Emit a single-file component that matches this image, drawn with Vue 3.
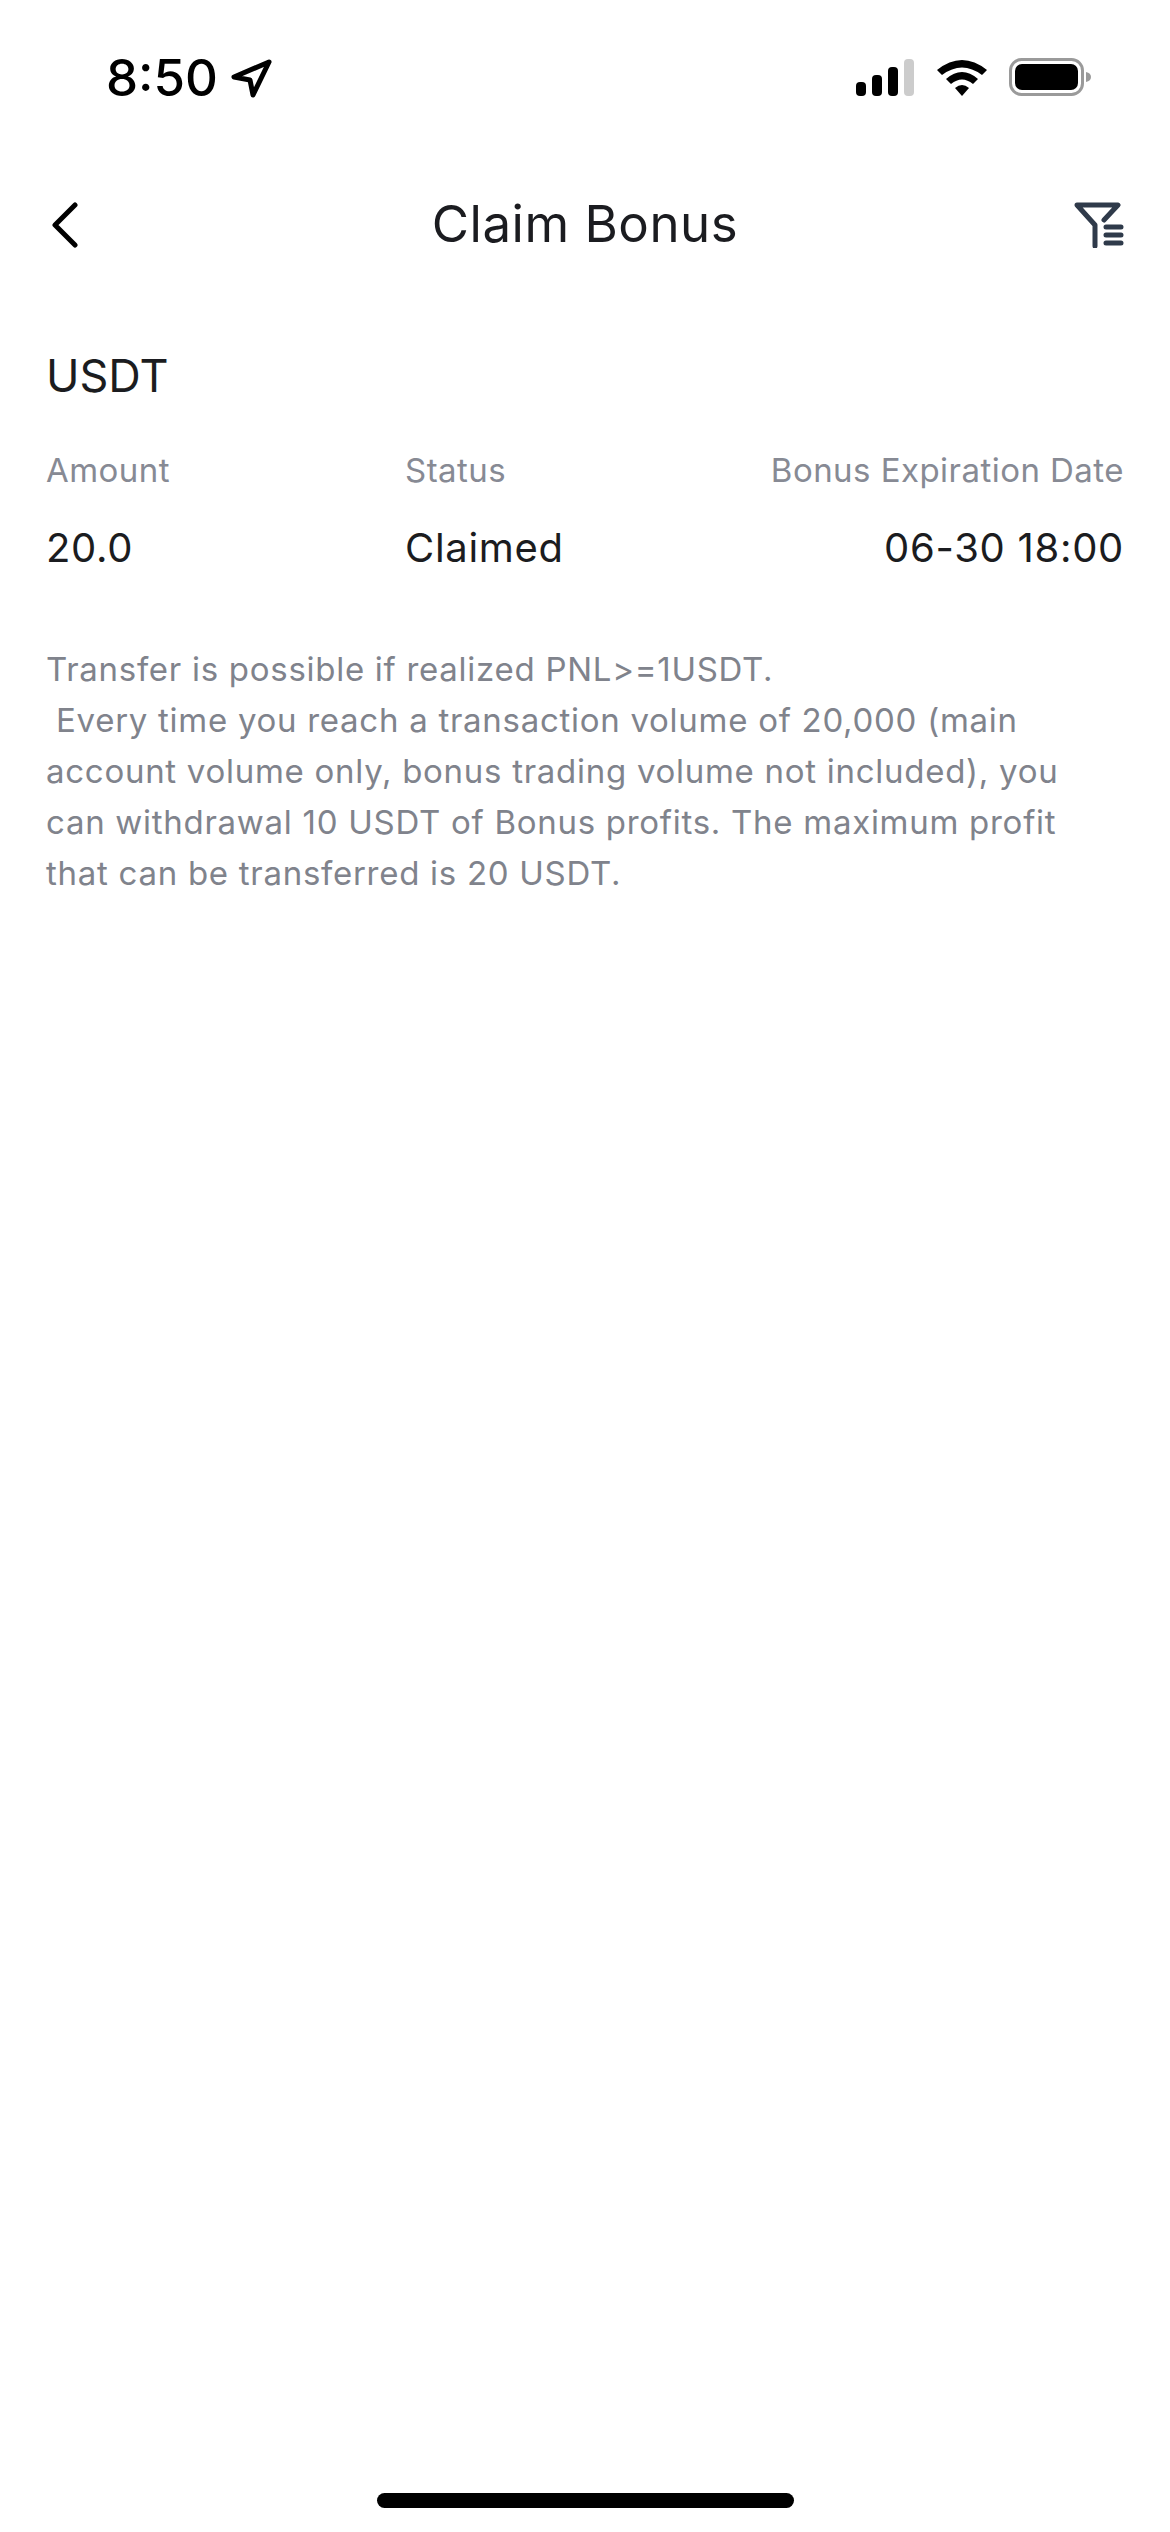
<template>
  <main class="app">
    <header class="status-bar">
      <div class="time-wrap">
        <span class="time">8:50</span>
        <svg class="location" width="42" height="42" viewBox="0 0 42 42">
          <path d="M39 5 L4 20 L20 23 L23 38 Z" fill="none" stroke="#000" stroke-width="5" stroke-linejoin="round" />
        </svg>
      </div>
      <div class="status-icons">
        <svg width="58" height="37" viewBox="0 0 58 37">
          <rect x="0" y="23" width="10" height="14" rx="4" fill="#000" />
          <rect x="16" y="16" width="10" height="21" rx="4" fill="#000" />
          <rect x="32" y="8" width="10" height="29" rx="4" fill="#000" />
          <rect x="48" y="0" width="10" height="37" rx="4" fill="#ccc" />
        </svg>
        <svg width="50" height="37" viewBox="0 0 50 37">
          <path d="M0 11 Q25 -9 50 11 L45 16 Q25 1 5 16 Z" fill="#000" />
          <path d="M9 20 Q25 6 41 20 L36 25 Q25 16 14 25 Z" fill="#000" />
          <path d="M18 29 Q25 23 32 29 L25 37 Z" fill="#000" />
        </svg>
        <svg width="82" height="38" viewBox="0 0 82 38">
          <rect x="1.5" y="1.5" width="72" height="35" rx="11" fill="none" stroke="#9a9a9a" stroke-width="3" />
          <rect x="6" y="6" width="63" height="26" rx="7" fill="#000" />
          <path d="M77 14 Q82 15 82 19 Q82 23 77 24 Z" fill="#9a9a9a" />
        </svg>
      </div>
    </header>

    <nav class="nav">
      <svg class="back" width="30" height="48" viewBox="0 0 30 48">
        <path d="M24 5 L4 25 L24 45" fill="none" stroke="#000" stroke-width="5" stroke-linecap="round" stroke-linejoin="round" />
      </svg>
      <h1 class="title">Claim Bonus</h1>
      <svg class="filter" width="50" height="48" viewBox="0 0 50 48">
        <path d="M30 20 L44 5 L3 5 L21 25 L21 46" fill="none" stroke="#2f3a4a" stroke-width="5" stroke-linecap="round" stroke-linejoin="round" />
        <path d="M32 27 H47 M32 35 H47 M32 43 H47" fill="none" stroke="#2f3a4a" stroke-width="5" stroke-linecap="round" />
      </svg>
    </nav>

    <section class="content">
      <h2 class="coin">USDT</h2>
      <div class="grid">
        <span class="label">Amount</span>
        <span class="label">Status</span>
        <span class="label right">Bonus Expiration Date</span>
        <span class="value">20.0</span>
        <span class="value">Claimed</span>
        <span class="value right">06-30 18:00</span>
      </div>
      <p class="note">
        Transfer is possible if realized PNL&gt;=1USDT.<br />
        &nbsp;Every time you reach a transaction volume of 20,000 (main account volume only, bonus trading volume not included), you can withdrawal 10 USDT of Bonus profits. The maximum profit that can be transferred is 20 USDT.
      </p>
    </section>

    <div class="home-indicator"></div>
  </main>
</template>

<script setup>
</script>

<style scoped>
.app {
  width: 1170px;
  height: 2532px;
  background: #fff;
  font-family: Inter, "Noto Sans", sans-serif;
  display: flex;
  flex-direction: column;
  color: #1b1c20;
}
.status-bar {
  height: 179px;
  padding: 50px 79px 0 106px;
  box-sizing: border-box;
  display: flex;
  justify-content: space-between;
  align-items: flex-start;
}
.time-wrap {
  display: flex;
  align-items: center;
  gap: 12px;
}
.time {
  font-size: 51px;
  line-height: 56px;
  font-weight: 500;
  color: #000;
}
.status-icons {
  display: flex;
  gap: 22.5px;
  align-items: center;
  padding-top: 8px;
}
.nav {
  height: 90px;
  padding: 0 46px;
  display: grid;
  grid-template-columns: 1fr auto 1fr;
  align-items: center;
}
.back {
  margin-left: 5px;
}
.filter {
  justify-self: end;
}
.title {
  font-size: 51px;
  font-weight: 400;
  margin: 0;
  line-height: 60px;
  letter-spacing: 0.5px;
}
.content {
  padding: 0 46px;
}
.coin {
  font-size: 45px;
  font-weight: 400;
  line-height: 54px;
  margin: 80px 0 0;
}
.grid {
  display: grid;
  grid-template-columns: 359px 1fr auto;
  row-gap: 33px;
  margin-top: 45px;
}
.label {
  font-size: 33px;
  line-height: 44px;
  letter-spacing: 0.46px;
  color: #878a94;
}
.value {
  font-size: 40px;
  line-height: 46px;
  letter-spacing: 0.7px;
}
.right {
  text-align: right;
}
.note {
  margin: 73px 0 0;
  font-size: 33px;
  line-height: 51px;
  letter-spacing: 0.72px;
  color: #80838c;
}
.home-indicator {
  width: 417px;
  height: 15px;
  border-radius: 8px;
  background: #000;
  margin: auto auto 24px;
}
</style>
